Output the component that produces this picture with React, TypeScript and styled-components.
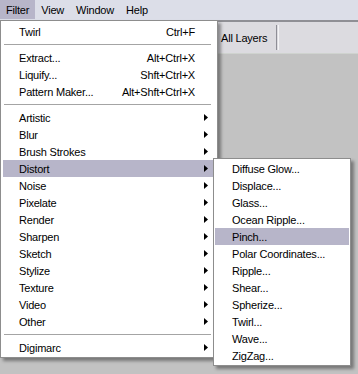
import React from 'react'
import styled, { createGlobalStyle } from 'styled-components'

const GlobalStyle = createGlobalStyle`
  html, body {
    margin: 0;
    padding: 0;
    background: #c2c2c2;
  }
  body {
    font-family: 'Liberation Sans', Arial, sans-serif;
    font-size: 11px;
    letter-spacing: -0.2px;
    color: #000;
  }
`

const Window = styled.div`
  position: relative;
  width: 358px;
  height: 374px;
  overflow: hidden;
  display: flex;
  flex-direction: column;
  background: #c2c2c2;
`

const MenuBar = styled.div`
  display: flex;
  height: 20px;
  background: #dcdee8;
`

const MenuTitle = styled.div<{ $active?: boolean }>`
  display: flex;
  align-items: center;
  padding: 0 6px;
  height: 19px;
  background: ${p => (p.$active ? '#b7b5c9' : 'transparent')};
`

const Toolbar = styled.div`
  display: flex;
  align-items: center;
  height: 31px;
  padding-left: 221px;
  background: #dcdbe0;
  border-top: 2px solid #8f8f95;
  border-bottom: 1px solid #cfd3cf;
`

const ToolLabel = styled.span`
  padding-right: 9px;
`

const ToolDivider = styled.div`
  width: 1px;
  height: 25px;
  border-left: 1px solid #8e8e96;
  border-right: 1px solid #f4f4f6;
`

const Workspace = styled.div`
  flex: 1;
`

const Menu = styled.div`
  position: absolute;
  top: 20px;
  left: 0;
  width: 218px;
  box-sizing: border-box;
  padding: 2px 2px 1px 2px;
  background: #fff;
  border: 1px solid #8d8d8d;
  box-shadow: 3px 3px 3px rgba(0, 0, 0, 0.38);
`

const SubMenu = styled.div`
  position: absolute;
  top: -2px;
  left: 210px;
  width: 138px;
  box-sizing: border-box;
  padding: 1px;
  background: #fff;
  border: 1px solid #8d8d8d;
  box-shadow: 3px 3px 3px rgba(0, 0, 0, 0.38);
  z-index: 2;
`

const Item = styled.div<{ $active?: boolean; $indent?: number }>`
  position: relative;
  display: flex;
  align-items: center;
  height: 17px;
  padding-left: ${p => p.$indent ?? 16}px;
  background: ${p => (p.$active ? '#b7b5c9' : 'transparent')};
  white-space: nowrap;
`

const Label = styled.span`
  flex: 1;
`

const Shortcut = styled.span`
  text-align: right;
`

const ArrowCell = styled.span`
  display: flex;
  align-items: center;
  width: 20px;
  padding-left: 9px;
  box-sizing: border-box;
`

const Separator = styled.div`
  height: 9px;
  display: flex;
  align-items: center;
  padding: 0 4px 0 1px;

  &::before {
    content: '';
    flex: 1;
    height: 1px;
    background: #a4a4a4;
  }
`

const Arrow = () => (
  <svg width="4" height="7" viewBox="0 0 4 7">
    <polygon points="0,0 4,3.5 0,7" fill="#000" />
  </svg>
)

type Entry = { label?: string; shortcut?: string; sub?: boolean; sep?: boolean }

const filterItems: Entry[] = [
  { label: 'Twirl', shortcut: 'Ctrl+F' },
  { sep: true },
  { label: 'Extract...', shortcut: 'Alt+Ctrl+X' },
  { label: 'Liquify...', shortcut: 'Shft+Ctrl+X' },
  { label: 'Pattern Maker...', shortcut: 'Alt+Shft+Ctrl+X' },
  { sep: true },
  { label: 'Artistic', sub: true },
  { label: 'Blur', sub: true },
  { label: 'Brush Strokes', sub: true },
  { label: 'Distort', sub: true },
  { label: 'Noise', sub: true },
  { label: 'Pixelate', sub: true },
  { label: 'Render', sub: true },
  { label: 'Sharpen', sub: true },
  { label: 'Sketch', sub: true },
  { label: 'Stylize', sub: true },
  { label: 'Texture', sub: true },
  { label: 'Video', sub: true },
  { label: 'Other', sub: true },
  { sep: true },
  { label: 'Digimarc', sub: true },
]

const distortItems = [
  'Diffuse Glow...',
  'Displace...',
  'Glass...',
  'Ocean Ripple...',
  'Pinch...',
  'Polar Coordinates...',
  'Ripple...',
  'Shear...',
  'Spherize...',
  'Twirl...',
  'Wave...',
  'ZigZag...',
]

export default function App() {
  return (
    <>
      <GlobalStyle />
      <Window>
        <MenuBar>
          <MenuTitle $active>Filter</MenuTitle>
          <MenuTitle>View</MenuTitle>
          <MenuTitle>Window</MenuTitle>
          <MenuTitle>Help</MenuTitle>
        </MenuBar>
        <Toolbar>
          <ToolLabel>All Layers</ToolLabel>
          <ToolDivider />
        </Toolbar>
        <Workspace />

        <Menu>
          {filterItems.map((it, i) =>
            it.sep ? (
              <Separator key={i} />
            ) : (
              <Item key={i} $active={it.label === 'Distort'}>
                <Label>{it.label}</Label>
                {it.shortcut && <Shortcut>{it.shortcut}</Shortcut>}
                <ArrowCell>{it.sub && <Arrow />}</ArrowCell>
                {it.label === 'Distort' && (
                  <SubMenu>
                    {distortItems.map(name => (
                      <Item key={name} $indent={17} $active={name === 'Pinch...'}>
                        <Label>{name}</Label>
                      </Item>
                    ))}
                  </SubMenu>
                )}
              </Item>
            )
          )}
        </Menu>
      </Window>
    </>
  )
}
